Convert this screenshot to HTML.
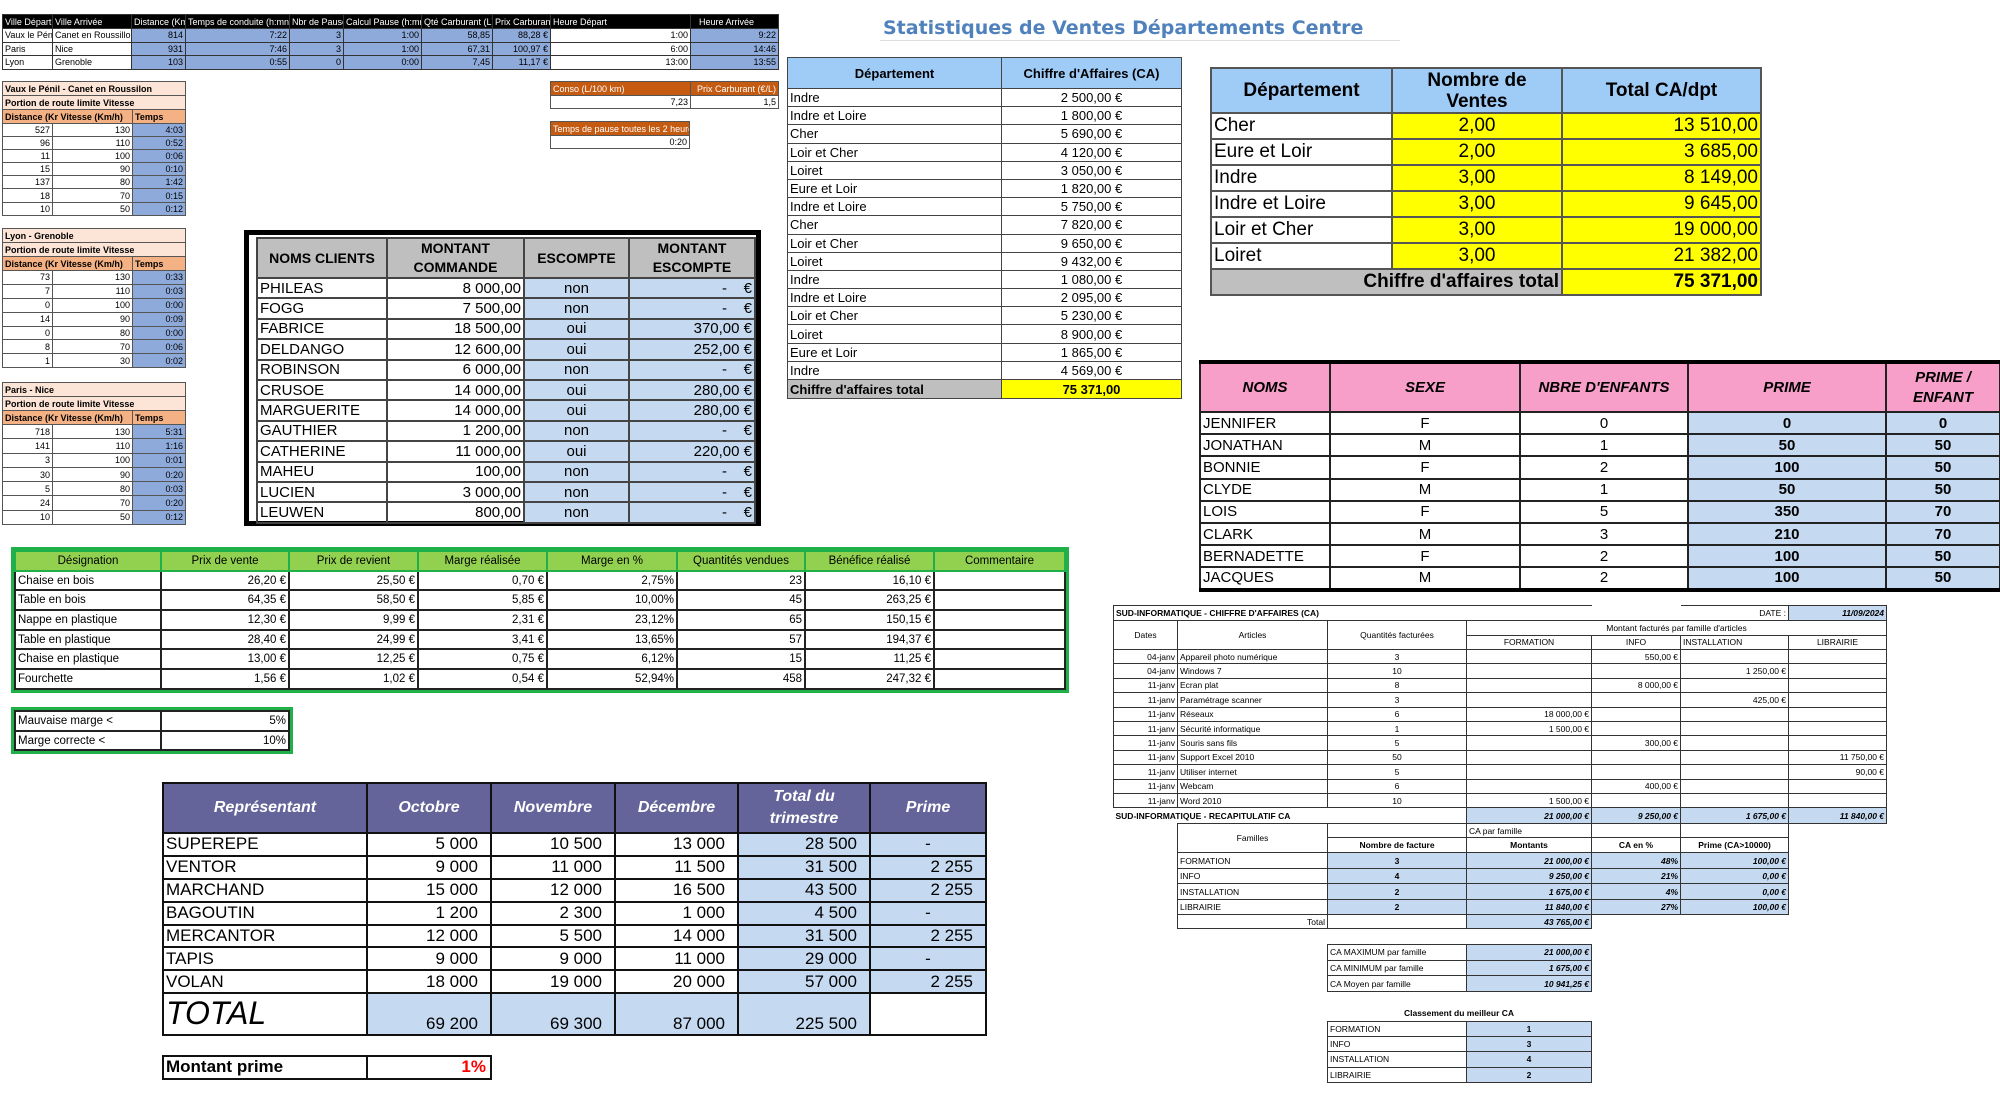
<!DOCTYPE html>
<html><head><meta charset="utf-8"><style>
*{margin:0;padding:0;box-sizing:border-box}
body{width:2000px;height:1100px;background:#fff;position:relative;overflow:hidden;font-family:"Liberation Sans Narrow","Liberation Sans",sans-serif;color:#000}
table{border-collapse:collapse;position:absolute;table-layout:fixed}
td{padding:0 2px;overflow:hidden;white-space:nowrap;vertical-align:middle}
.r{text-align:right}.c{text-align:center}.b{font-weight:bold}.i{font-style:italic}
.bl{background:#8eaadb}.lb{background:#c5d9f1}.y{background:#ffff00}.g{background:#bfbfbf}
.t1 td{border:1px solid #333;font-size:9px;height:13.5px}
.t1 tr:first-child td{background:#000;color:#fff;height:14px}
.sm td{border:1px solid #555;font-size:9px}
.sm .p{background:#fce4d6;font-weight:bold}
.sm .o{background:#f4b183;font-weight:bold}
.cl td{border:2px solid #444;font-size:15px}
.cl .h td{background:#bfbfbf;font-weight:bold;text-align:center;font-size:14px;line-height:19px}
.d1 td{border:1px solid #444;font-size:13px}
.d2 td{border:2px solid #555;font-size:19px}
.nm td{border:2px solid #222;font-size:15px}
.nm .h td{background:#f79fc8;font-weight:bold;font-style:italic;text-align:center;font-size:15px}
.gr td{border:2px solid #222;font-size:11.5px;height:19.7px}
.gr{outline:3px solid #1fb04a}
.gr .h td{background:#92d050;text-align:center;border-color:#1fb04a}
.rp td{border:2px solid #111;font-size:17px;height:22.9px}
.rp td.r{padding-right:12px}
.rp .h td{background:#64649a;color:#fff;font-weight:bold;font-style:italic;text-align:center;font-size:16px}
.sd td{border:1px solid #333;font-size:8.5px;font-family:"Liberation Sans",sans-serif}
</style></head><body>

<table class="t1" style="left:2px;top:14px;width:776px">
<colgroup><col style="width:50px"><col style="width:79px"><col style="width:54px"><col style="width:104px"><col style="width:54px"><col style="width:78px"><col style="width:71px"><col style="width:58px"><col style="width:140px"><col style="width:88px"></colgroup>
<tr><td>Ville Départ</td><td>Ville Arrivée</td><td>Distance (Km</td><td>Temps de conduite (h:mn</td><td>Nbr de Pause</td><td>Calcul Pause (h:mn</td><td>Qté Carburant (L)</td><td>Prix Carburant</td><td>Heure Départ</td><td style="padding-left:8px">Heure Arrivée</td></tr>
<tr><td>Vaux le Péni</td><td>Canet en Roussillon</td><td class="r bl">814</td><td class="r bl">7:22</td><td class="r bl">3</td><td class="r bl">1:00</td><td class="r bl">58,85</td><td class="r bl">88,28 €</td><td class="r">1:00</td><td class="r bl">9:22</td></tr>
<tr><td>Paris</td><td>Nice</td><td class="r bl">931</td><td class="r bl">7:46</td><td class="r bl">3</td><td class="r bl">1:00</td><td class="r bl">67,31</td><td class="r bl">100,97 €</td><td class="r">6:00</td><td class="r bl">14:46</td></tr>
<tr><td>Lyon</td><td>Grenoble</td><td class="r bl">103</td><td class="r bl">0:55</td><td class="r bl">0</td><td class="r bl">0:00</td><td class="r bl">7,45</td><td class="r bl">11,17 €</td><td class="r">13:00</td><td class="r bl">13:55</td></tr>
</table>

<table class="sm" style="left:2px;top:81px;width:183px">
<colgroup><col style="width:50px"><col style="width:80px"><col style="width:53px"></colgroup>
<tr style="height:14px"><td class="p" colspan="3">Vaux le Pénil - Canet en Roussilon</td></tr>
<tr style="height:14px"><td class="p" colspan="3">Portion de route limite Vitesse</td></tr>
<tr style="height:14px"><td class="o" colspan="2">Distance (Kr Vitesse (Km/h)</td><td class="o">Temps</td></tr>
<tr style="height:13.1px"><td class="r">527</td><td class="r">130</td><td class="r bl">4:03</td></tr>
<tr style="height:13.1px"><td class="r">96</td><td class="r">110</td><td class="r bl">0:52</td></tr>
<tr style="height:13.1px"><td class="r">11</td><td class="r">100</td><td class="r bl">0:06</td></tr>
<tr style="height:13.1px"><td class="r">15</td><td class="r">90</td><td class="r bl">0:10</td></tr>
<tr style="height:13.1px"><td class="r">137</td><td class="r">80</td><td class="r bl">1:42</td></tr>
<tr style="height:13.1px"><td class="r">18</td><td class="r">70</td><td class="r bl">0:15</td></tr>
<tr style="height:13.1px"><td class="r">10</td><td class="r">50</td><td class="r bl">0:12</td></tr>
</table>
<table class="sm" style="left:2px;top:228px;width:183px">
<colgroup><col style="width:50px"><col style="width:80px"><col style="width:53px"></colgroup>
<tr style="height:14px"><td class="p" colspan="3">Lyon - Grenoble</td></tr>
<tr style="height:14px"><td class="p" colspan="3">Portion de route limite Vitesse</td></tr>
<tr style="height:14px"><td class="o" colspan="2">Distance (Kr Vitesse (Km/h)</td><td class="o">Temps</td></tr>
<tr style="height:13.9px"><td class="r">73</td><td class="r">130</td><td class="r bl">0:33</td></tr>
<tr style="height:13.9px"><td class="r">7</td><td class="r">110</td><td class="r bl">0:03</td></tr>
<tr style="height:13.9px"><td class="r">0</td><td class="r">100</td><td class="r bl">0:00</td></tr>
<tr style="height:13.9px"><td class="r">14</td><td class="r">90</td><td class="r bl">0:09</td></tr>
<tr style="height:13.9px"><td class="r">0</td><td class="r">80</td><td class="r bl">0:00</td></tr>
<tr style="height:13.9px"><td class="r">8</td><td class="r">70</td><td class="r bl">0:06</td></tr>
<tr style="height:13.9px"><td class="r">1</td><td class="r">30</td><td class="r bl">0:02</td></tr>
</table>
<table class="sm" style="left:2px;top:382px;width:183px">
<colgroup><col style="width:50px"><col style="width:80px"><col style="width:53px"></colgroup>
<tr style="height:14px"><td class="p" colspan="3">Paris - Nice</td></tr>
<tr style="height:14px"><td class="p" colspan="3">Portion de route limite Vitesse</td></tr>
<tr style="height:14px"><td class="o" colspan="2">Distance (Kr Vitesse (Km/h)</td><td class="o">Temps</td></tr>
<tr style="height:14.3px"><td class="r">718</td><td class="r">130</td><td class="r bl">5:31</td></tr>
<tr style="height:14.3px"><td class="r">141</td><td class="r">110</td><td class="r bl">1:16</td></tr>
<tr style="height:14.3px"><td class="r">3</td><td class="r">100</td><td class="r bl">0:01</td></tr>
<tr style="height:14.3px"><td class="r">30</td><td class="r">90</td><td class="r bl">0:20</td></tr>
<tr style="height:14.3px"><td class="r">5</td><td class="r">80</td><td class="r bl">0:03</td></tr>
<tr style="height:14.3px"><td class="r">24</td><td class="r">70</td><td class="r bl">0:20</td></tr>
<tr style="height:14.3px"><td class="r">10</td><td class="r">50</td><td class="r bl">0:12</td></tr>
</table>

<table class="sm" style="left:550px;top:81px;width:228px">
<colgroup><col style="width:140px"><col style="width:88px"></colgroup>
<tr style="height:14px"><td style="background:#c55a11;color:#fff">Conso (L/100 km)</td><td class="r" style="background:#c55a11;color:#fff">Prix Carburant (€/L)</td></tr>
<tr style="height:13px"><td class="r">7,23</td><td class="r">1,5</td></tr>
</table>
<table class="sm" style="left:550px;top:121px;width:140px">
<tr style="height:14px"><td style="background:#c55a11;color:#fff">Temps de pause toutes les 2 heure</td></tr>
<tr style="height:13px"><td class="r">0:20</td></tr>
</table>

<div style="position:absolute;left:244px;top:230px;width:517px;height:296px;border:5px solid #000"></div>
<table class="cl" style="left:256px;top:237px;width:498px">
<colgroup><col style="width:130px"><col style="width:137px"><col style="width:105px"><col style="width:126px"></colgroup>
<tr class="h" style="height:40px"><td>NOMS CLIENTS</td><td>MONTANT<br>COMMANDE</td><td>ESCOMPTE</td><td>MONTANT<br>ESCOMPTE</td></tr>
<tr style="height:20.4px"><td>PHILEAS</td><td class="r">8 000,00</td><td class="c lb">non</td><td class="r lb">-&nbsp;&nbsp;&nbsp;&nbsp;€</td></tr>
<tr style="height:20.4px"><td>FOGG</td><td class="r">7 500,00</td><td class="c lb">non</td><td class="r lb">-&nbsp;&nbsp;&nbsp;&nbsp;€</td></tr>
<tr style="height:20.4px"><td>FABRICE</td><td class="r">18 500,00</td><td class="c lb">oui</td><td class="r lb">370,00 €</td></tr>
<tr style="height:20.4px"><td>DELDANGO</td><td class="r">12 600,00</td><td class="c lb">oui</td><td class="r lb">252,00 €</td></tr>
<tr style="height:20.4px"><td>ROBINSON</td><td class="r">6 000,00</td><td class="c lb">non</td><td class="r lb">-&nbsp;&nbsp;&nbsp;&nbsp;€</td></tr>
<tr style="height:20.4px"><td>CRUSOE</td><td class="r">14 000,00</td><td class="c lb">oui</td><td class="r lb">280,00 €</td></tr>
<tr style="height:20.4px"><td>MARGUERITE</td><td class="r">14 000,00</td><td class="c lb">oui</td><td class="r lb">280,00 €</td></tr>
<tr style="height:20.4px"><td>GAUTHIER</td><td class="r">1 200,00</td><td class="c lb">non</td><td class="r lb">-&nbsp;&nbsp;&nbsp;&nbsp;€</td></tr>
<tr style="height:20.4px"><td>CATHERINE</td><td class="r">11 000,00</td><td class="c lb">oui</td><td class="r lb">220,00 €</td></tr>
<tr style="height:20.4px"><td>MAHEU</td><td class="r">100,00</td><td class="c lb">non</td><td class="r lb">-&nbsp;&nbsp;&nbsp;&nbsp;€</td></tr>
<tr style="height:20.4px"><td>LUCIEN</td><td class="r">3 000,00</td><td class="c lb">non</td><td class="r lb">-&nbsp;&nbsp;&nbsp;&nbsp;€</td></tr>
<tr style="height:20.4px"><td>LEUWEN</td><td class="r">800,00</td><td class="c lb">non</td><td class="r lb">-&nbsp;&nbsp;&nbsp;&nbsp;€</td></tr>
</table>

<div style="position:absolute;left:880px;top:17px;width:520px;border-bottom:1px solid #ddd;font-family:'DejaVu Sans',sans-serif;font-weight:bold;font-size:19px;color:#4f81bd;padding-left:3px;height:24px">Statistiques de Ventes Départements Centre</div>

<table class="d1" style="left:787px;top:57px;width:394px">
<colgroup><col style="width:214px"><col style="width:180px"></colgroup>
<tr style="height:31px;background:#9fcbf7" class="b"><td class="c">Département</td><td class="c">Chiffre d'Affaires (CA)</td></tr>
<tr style="height:18.2px"><td>Indre</td><td class="c">2 500,00 €</td></tr>
<tr style="height:18.2px"><td>Indre et Loire</td><td class="c">1 800,00 €</td></tr>
<tr style="height:18.2px"><td>Cher</td><td class="c">5 690,00 €</td></tr>
<tr style="height:18.2px"><td>Loir et Cher</td><td class="c">4 120,00 €</td></tr>
<tr style="height:18.2px"><td>Loiret</td><td class="c">3 050,00 €</td></tr>
<tr style="height:18.2px"><td>Eure et Loir</td><td class="c">1 820,00 €</td></tr>
<tr style="height:18.2px"><td>Indre et Loire</td><td class="c">5 750,00 €</td></tr>
<tr style="height:18.2px"><td>Cher</td><td class="c">7 820,00 €</td></tr>
<tr style="height:18.2px"><td>Loir et Cher</td><td class="c">9 650,00 €</td></tr>
<tr style="height:18.2px"><td>Loiret</td><td class="c">9 432,00 €</td></tr>
<tr style="height:18.2px"><td>Indre</td><td class="c">1 080,00 €</td></tr>
<tr style="height:18.2px"><td>Indre et Loire</td><td class="c">2 095,00 €</td></tr>
<tr style="height:18.2px"><td>Loir et Cher</td><td class="c">5 230,00 €</td></tr>
<tr style="height:18.2px"><td>Loiret</td><td class="c">8 900,00 €</td></tr>
<tr style="height:18.2px"><td>Eure et Loir</td><td class="c">1 865,00 €</td></tr>
<tr style="height:18.2px"><td>Indre</td><td class="c">4 569,00 €</td></tr>
<tr style="height:19px" class="b"><td class="g">Chiffre d'affaires total</td><td class="c y">75 371,00</td></tr>
</table>

<table class="d2" style="left:1210px;top:67px;width:550px">
<colgroup><col style="width:181px"><col style="width:170px"><col style="width:199px"></colgroup>
<tr style="height:45px;background:#9fcbf7" class="b"><td class="c">Département</td><td class="c" style="line-height:21px">Nombre de<br>Ventes</td><td class="c">Total CA/dpt</td></tr>
<tr style="height:26px"><td>Cher</td><td class="c y">2,00</td><td class="r y">13 510,00</td></tr>
<tr style="height:26px"><td>Eure et Loir</td><td class="c y">2,00</td><td class="r y">3 685,00</td></tr>
<tr style="height:26px"><td>Indre</td><td class="c y">3,00</td><td class="r y">8 149,00</td></tr>
<tr style="height:26px"><td>Indre et Loire</td><td class="c y">3,00</td><td class="r y">9 645,00</td></tr>
<tr style="height:26px"><td>Loir et Cher</td><td class="c y">3,00</td><td class="r y">19 000,00</td></tr>
<tr style="height:26px"><td>Loiret</td><td class="c y">3,00</td><td class="r y">21 382,00</td></tr>
<tr style="height:26px" class="b"><td class="g r" colspan="2">Chiffre d'affaires total</td><td class="r y">75 371,00</td></tr>
</table>

<table class="nm" style="left:1199px;top:360px;width:800px;border-top:4px solid #000;border-bottom:4px solid #000">
<colgroup><col style="width:130px"><col style="width:190px"><col style="width:168px"><col style="width:198px"><col style="width:114px"></colgroup>
<tr class="h" style="height:50px"><td>NOMS</td><td>SEXE</td><td>NBRE D'ENFANTS</td><td>PRIME</td><td style="line-height:20px">PRIME /<br>ENFANT</td></tr>
<tr style="height:22.2px"><td>JENNIFER</td><td class="c">F</td><td class="c">0</td><td class="c b lb">0</td><td class="c b lb">0</td></tr>
<tr style="height:22.2px"><td>JONATHAN</td><td class="c">M</td><td class="c">1</td><td class="c b lb">50</td><td class="c b lb">50</td></tr>
<tr style="height:22.2px"><td>BONNIE</td><td class="c">F</td><td class="c">2</td><td class="c b lb">100</td><td class="c b lb">50</td></tr>
<tr style="height:22.2px"><td>CLYDE</td><td class="c">M</td><td class="c">1</td><td class="c b lb">50</td><td class="c b lb">50</td></tr>
<tr style="height:22.2px"><td>LOIS</td><td class="c">F</td><td class="c">5</td><td class="c b lb">350</td><td class="c b lb">70</td></tr>
<tr style="height:22.2px"><td>CLARK</td><td class="c">M</td><td class="c">3</td><td class="c b lb">210</td><td class="c b lb">70</td></tr>
<tr style="height:22.2px"><td>BERNADETTE</td><td class="c">F</td><td class="c">2</td><td class="c b lb">100</td><td class="c b lb">50</td></tr>
<tr style="height:22.2px"><td>JACQUES</td><td class="c">M</td><td class="c">2</td><td class="c b lb">100</td><td class="c b lb">50</td></tr>
</table>

<table class="gr" style="left:14px;top:550px;width:1050px">
<colgroup><col style="width:146px"><col style="width:128px"><col style="width:129px"><col style="width:129px"><col style="width:130px"><col style="width:128px"><col style="width:129px"><col style="width:131px"></colgroup>
<tr class="h"><td>Désignation</td><td>Prix de vente</td><td>Prix de revient</td><td>Marge réalisée</td><td>Marge en %</td><td>Quantités vendues</td><td>Bénéfice réalisé</td><td>Commentaire</td></tr>
<tr><td>Chaise en bois</td><td class="r">26,20 €</td><td class="r">25,50 €</td><td class="r">0,70 €</td><td class="r">2,75%</td><td class="r">23</td><td class="r">16,10 €</td><td></td></tr>
<tr><td>Table en bois</td><td class="r">64,35 €</td><td class="r">58,50 €</td><td class="r">5,85 €</td><td class="r">10,00%</td><td class="r">45</td><td class="r">263,25 €</td><td></td></tr>
<tr><td>Nappe en plastique</td><td class="r">12,30 €</td><td class="r">9,99 €</td><td class="r">2,31 €</td><td class="r">23,12%</td><td class="r">65</td><td class="r">150,15 €</td><td></td></tr>
<tr><td>Table en plastique</td><td class="r">28,40 €</td><td class="r">24,99 €</td><td class="r">3,41 €</td><td class="r">13,65%</td><td class="r">57</td><td class="r">194,37 €</td><td></td></tr>
<tr><td>Chaise en plastique</td><td class="r">13,00 €</td><td class="r">12,25 €</td><td class="r">0,75 €</td><td class="r">6,12%</td><td class="r">15</td><td class="r">11,25 €</td><td></td></tr>
<tr><td>Fourchette</td><td class="r">1,56 €</td><td class="r">1,02 €</td><td class="r">0,54 €</td><td class="r">52,94%</td><td class="r">458</td><td class="r">247,32 €</td><td></td></tr>
</table>
<table class="gr" style="left:14px;top:710px;width:274px">
<colgroup><col style="width:146px"><col style="width:128px"></colgroup>
<tr><td>Mauvaise marge &lt;</td><td class="r">5%</td></tr>
<tr><td>Marge correcte &lt;</td><td class="r">10%</td></tr>
</table>

<table class="rp" style="left:162px;top:782px;width:823px">
<colgroup><col style="width:204px"><col style="width:124px"><col style="width:124px"><col style="width:123px"><col style="width:132px"><col style="width:116px"></colgroup>
<tr class="h" style="height:50px"><td>Représentant</td><td>Octobre</td><td>Novembre</td><td>Décembre</td><td style="line-height:22px">Total du<br>trimestre</td><td>Prime</td></tr>
<tr><td>SUPEREPE</td><td class="r">5 000</td><td class="r">10 500</td><td class="r">13 000</td><td class="r lb">28 500</td><td class="c lb">-</td></tr>
<tr><td>VENTOR</td><td class="r">9 000</td><td class="r">11 000</td><td class="r">11 500</td><td class="r lb">31 500</td><td class="r lb">2 255</td></tr>
<tr><td>MARCHAND</td><td class="r">15 000</td><td class="r">12 000</td><td class="r">16 500</td><td class="r lb">43 500</td><td class="r lb">2 255</td></tr>
<tr><td>BAGOUTIN</td><td class="r">1 200</td><td class="r">2 300</td><td class="r">1 000</td><td class="r lb">4 500</td><td class="c lb">-</td></tr>
<tr><td>MERCANTOR</td><td class="r">12 000</td><td class="r">5 500</td><td class="r">14 000</td><td class="r lb">31 500</td><td class="r lb">2 255</td></tr>
<tr><td>TAPIS</td><td class="r">9 000</td><td class="r">9 000</td><td class="r">11 000</td><td class="r lb">29 000</td><td class="c lb">-</td></tr>
<tr><td>VOLAN</td><td class="r">18 000</td><td class="r">19 000</td><td class="r">20 000</td><td class="r lb">57 000</td><td class="r lb">2 255</td></tr>
<tr style="height:42px"><td class="i" style="font-size:32px;vertical-align:top;line-height:38px">TOTAL</td><td class="r lb" style="vertical-align:bottom">69 200</td><td class="r lb" style="vertical-align:bottom">69 300</td><td class="r lb" style="vertical-align:bottom">87 000</td><td class="r lb" style="vertical-align:bottom">225 500</td><td></td></tr>
</table>
<table class="rp" style="left:162px;top:1055px;width:328px">
<colgroup><col style="width:204px"><col style="width:124px"></colgroup>
<tr><td class="b">Montant prime</td><td class="r b" style="color:#f00;padding-right:4px">1%</td></tr>
</table>

<table class="sd" style="left:1113px;top:605px;width:773px">
<colgroup><col style="width:64px"><col style="width:150px"><col style="width:139px"><col style="width:125px"><col style="width:89px"><col style="width:108px"><col style="width:98px"></colgroup>
<tr style="height:15px"><td colspan="3" class="b" style="border-right:none">SUD-INFORMATIQUE - CHIFFRE D'AFFAIRES (CA)</td><td style="border-left:none;border-right:none"></td><td style="border:none"></td><td class="r" style="border-left:none">DATE :</td><td class="r b i lb">11/09/2024</td></tr>
<tr style="height:14.5px"><td class="c" rowspan="2">Dates</td><td class="c" rowspan="2">Articles</td><td class="c" rowspan="2">Quantités facturées</td><td class="c" colspan="4">Montant facturés par famille d'articles</td></tr>
<tr style="height:14.5px"><td class="c">FORMATION</td><td class="c">INFO</td><td>INSTALLATION</td><td class="c">LIBRAIRIE</td></tr>
<tr style="height:14.4px"><td class="r">04-janv</td><td>Appareil photo numérique</td><td class="c">3</td><td></td><td class="r">550,00 €</td><td></td><td></td></tr>
<tr style="height:14.4px"><td class="r">04-janv</td><td>Windows 7</td><td class="c">10</td><td></td><td></td><td class="r">1 250,00 €</td><td></td></tr>
<tr style="height:14.4px"><td class="r">11-janv</td><td>Ecran plat</td><td class="c">8</td><td></td><td class="r">8 000,00 €</td><td></td><td></td></tr>
<tr style="height:14.4px"><td class="r">11-janv</td><td>Paramétrage scanner</td><td class="c">3</td><td></td><td></td><td class="r">425,00 €</td><td></td></tr>
<tr style="height:14.4px"><td class="r">11-janv</td><td>Réseaux</td><td class="c">6</td><td class="r">18 000,00 €</td><td></td><td></td><td></td></tr>
<tr style="height:14.4px"><td class="r">11-janv</td><td>Sécurité informatique</td><td class="c">1</td><td class="r">1 500,00 €</td><td></td><td></td><td></td></tr>
<tr style="height:14.4px"><td class="r">11-janv</td><td>Souris sans fils</td><td class="c">5</td><td></td><td class="r">300,00 €</td><td></td><td></td></tr>
<tr style="height:14.4px"><td class="r">11-janv</td><td>Support Excel 2010</td><td class="c">50</td><td></td><td></td><td></td><td class="r">11 750,00 €</td></tr>
<tr style="height:14.4px"><td class="r">11-janv</td><td>Utiliser internet</td><td class="c">5</td><td></td><td></td><td></td><td class="r">90,00 €</td></tr>
<tr style="height:14.4px"><td class="r">11-janv</td><td>Webcam</td><td class="c">6</td><td></td><td class="r">400,00 €</td><td></td><td></td></tr>
<tr style="height:14.4px"><td class="r">11-janv</td><td>Word 2010</td><td class="c">10</td><td class="r">1 500,00 €</td><td></td><td></td><td></td></tr>
<tr style="height:16px"><td colspan="3" class="b" style="border-left:none;border-bottom:none">SUD-INFORMATIQUE - RECAPITULATIF CA</td><td class="r b i lb">21 000,00 €</td><td class="r b i lb">9 250,00 €</td><td class="r b i lb">1 675,00 €</td><td class="r b i lb">11 840,00 €</td></tr>
<tr style="height:14px"><td style="border:none"></td><td rowspan="2" class="c">Familles</td><td style="border-bottom:none"></td><td style="border-bottom:none">CA par famille</td><td style="border-bottom:none"></td><td style="border-bottom:none"></td><td style="border:none"></td></tr>
<tr style="height:15px"><td style="border:none"></td><td class="c b">Nombre de facture</td><td class="c b">Montants</td><td class="c b">CA en %</td><td class="c b">Prime (CA&gt;10000)</td><td style="border:none"></td></tr>
<tr style="height:15.5px"><td style="border:none"></td><td>FORMATION</td><td class="c b lb">3</td><td class="r b i lb">21 000,00 €</td><td class="r b i lb">48%</td><td class="r b i lb">100,00 €</td><td style="border:none"></td></tr>
<tr style="height:15.5px"><td style="border:none"></td><td>INFO</td><td class="c b lb">4</td><td class="r b i lb">9 250,00 €</td><td class="r b i lb">21%</td><td class="r b i lb">0,00 €</td><td style="border:none"></td></tr>
<tr style="height:15.5px"><td style="border:none"></td><td>INSTALLATION</td><td class="c b lb">2</td><td class="r b i lb">1 675,00 €</td><td class="r b i lb">4%</td><td class="r b i lb">0,00 €</td><td style="border:none"></td></tr>
<tr style="height:15.5px"><td style="border:none"></td><td>LIBRAIRIE</td><td class="c b lb">2</td><td class="r b i lb">11 840,00 €</td><td class="r b i lb">27%</td><td class="r b i lb">100,00 €</td><td style="border:none"></td></tr>
<tr style="height:14px"><td style="border:none"></td><td class="r">Total</td><td></td><td class="r b i lb">43 765,00 €</td><td style="border:none"></td><td style="border:none"></td><td style="border:none"></td></tr>
</table>
<table class="sd" style="left:1327px;top:944px;width:264px">
<colgroup><col style="width:139px"><col style="width:125px"></colgroup>
<tr style="height:15.7px"><td>CA MAXIMUM par famille</td><td class="r b i lb">21 000,00 €</td></tr>
<tr style="height:15.7px"><td>CA MINIMUM par famille</td><td class="r b i lb">1 675,00 €</td></tr>
<tr style="height:15.7px"><td>CA Moyen par famille</td><td class="r b i lb">10 941,25 €</td></tr>
</table>
<div style="position:absolute;left:1327px;top:1008px;width:264px;text-align:center;font:bold 8.5px 'Liberation Sans',sans-serif">Classement du meilleur CA</div>
<table class="sd" style="left:1327px;top:1021px;width:264px">
<colgroup><col style="width:139px"><col style="width:125px"></colgroup>
<tr style="height:15.2px"><td>FORMATION</td><td class="c b lb">1</td></tr>
<tr style="height:15.2px"><td>INFO</td><td class="c b lb">3</td></tr>
<tr style="height:15.2px"><td>INSTALLATION</td><td class="c b lb">4</td></tr>
<tr style="height:15.2px"><td>LIBRAIRIE</td><td class="c b lb">2</td></tr>
</table>
</body></html>
